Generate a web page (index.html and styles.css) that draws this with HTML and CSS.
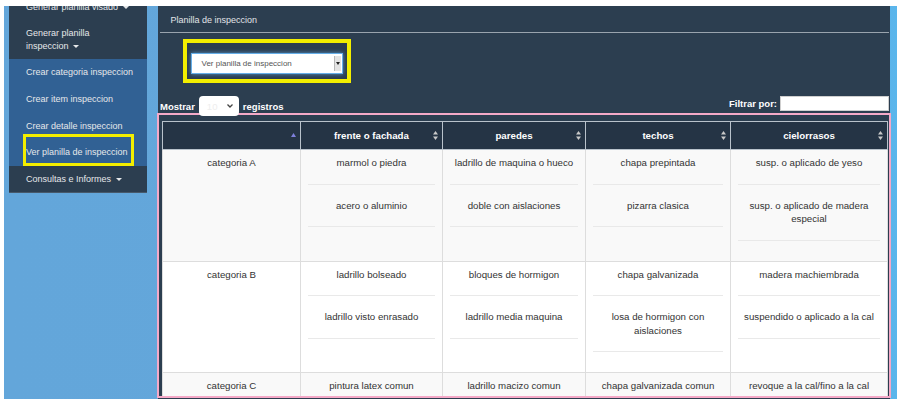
FILE: index.html
```html
<!DOCTYPE html>
<html lang="es">
<head>
<meta charset="utf-8">
<title>Planilla de inspeccion</title>
<link rel="stylesheet" href="styles.css">
</head>
<body>
<div class="frame">
  <nav class="sidebar">
    <div class="nav-item">Generar planilla visado <span class="caret"></span></div>
    <div class="nav-item">Generar planilla<br>inspeccion <span class="caret"></span></div>
    <div class="submenu">
      <div class="sub-item">Crear categoria inspeccion</div>
      <div class="sub-item">Crear item inspeccion</div>
      <div class="sub-item">Crear detalle inspeccion</div>
      <div class="sub-item active">Ver planilla de inspeccion</div>
    </div>
    <div class="nav-item">Consultas e Informes <span class="caret"></span></div>
  </nav>

  <main class="panel">
    <div class="panel-title">Planilla de inspeccion</div>
    <div class="rule"></div>

    <div class="picker">
      <div class="fake-select">
        <span>Ver planilla de inspeccion</span>
        <span class="fake-arrow"><span class="tri"></span></span>
      </div>
    </div>

    <div class="controls">
      <span>Mostrar</span>
      <span class="len-select">
        <span class="len-val">10</span>
        <svg width="6" height="4" viewBox="0 0 6 4"><polyline points="0.5,0.5 3,3 5.5,0.5" fill="none" stroke="#444" stroke-width="1.3"/></svg>
      </span>
      <span>registros</span>
      <div class="filter">
        <span>Filtrar por:</span>
        <span class="filter-input"></span>
      </div>
    </div>

    <div class="results">
      <table class="grid">
        <colgroup>
          <col class="c1"><col class="c2"><col class="c3"><col class="c4"><col class="c5">
        </colgroup>
        <thead>
          <tr>
            <th><div class="th-inner"><span></span><span></span><svg class="sort" width="5" height="4" viewBox="0 0 5 4"><polygon points="0,4 2.5,0 5,4" fill="#7f80dc"/></svg></div></th>
            <th><div class="th-inner"><span></span><span>frente o fachada</span><svg class="sort" width="5" height="9" viewBox="0 0 5 9"><polygon points="0,3.6 2.5,0 5,3.6" fill="#c9c9c9"/><polygon points="0,5.4 2.5,9 5,5.4" fill="#c9c9c9"/></svg></div></th>
            <th><div class="th-inner"><span></span><span>paredes</span><svg class="sort" width="5" height="9" viewBox="0 0 5 9"><polygon points="0,3.6 2.5,0 5,3.6" fill="#c9c9c9"/><polygon points="0,5.4 2.5,9 5,5.4" fill="#c9c9c9"/></svg></div></th>
            <th><div class="th-inner"><span></span><span>techos</span><svg class="sort" width="5" height="9" viewBox="0 0 5 9"><polygon points="0,3.6 2.5,0 5,3.6" fill="#c9c9c9"/><polygon points="0,5.4 2.5,9 5,5.4" fill="#c9c9c9"/></svg></div></th>
            <th><div class="th-inner"><span></span><span>cielorrasos</span><svg class="sort" width="5" height="9" viewBox="0 0 5 9"><polygon points="0,3.6 2.5,0 5,3.6" fill="#c9c9c9"/><polygon points="0,5.4 2.5,9 5,5.4" fill="#c9c9c9"/></svg></div></th>
          </tr>
        </thead>
        <tbody>
          <tr>
            <td>categoria A</td>
            <td><div class="item">marmol o piedra</div><div class="item">acero o aluminio</div></td>
            <td><div class="item">ladrillo de maquina o hueco</div><div class="item">doble con aislaciones</div></td>
            <td><div class="item">chapa prepintada</div><div class="item">pizarra clasica</div></td>
            <td><div class="item">susp. o aplicado de yeso</div><div class="item">susp. o aplicado de madera especial</div></td>
          </tr>
          <tr>
            <td>categoria B</td>
            <td><div class="item">ladrillo bolseado</div><div class="item">ladrillo visto enrasado</div></td>
            <td><div class="item">bloques de hormigon</div><div class="item">ladrillo media maquina</div></td>
            <td><div class="item">chapa galvanizada</div><div class="item">losa de hormigon con aislaciones</div></td>
            <td><div class="item">madera machiembrada</div><div class="item">suspendido o aplicado a la cal</div></td>
          </tr>
          <tr>
            <td>categoria C</td>
            <td><div class="item">pintura latex comun</div></td>
            <td><div class="item">ladrillo macizo comun</div></td>
            <td><div class="item">chapa galvanizada comun</div></td>
            <td><div class="item">revoque a la cal/fino a la cal</div></td>
          </tr>
        </tbody>
      </table>
    </div>
  </main>
</div>
</body>
</html>
```

FILE: styles.css
```css
html, body {
  margin: 0;
  padding: 0;
  background: #ffffff;
  font-family: "Liberation Sans", Arial, Helvetica, sans-serif;
}

.frame {
  margin: 6px 0 0 4px;
  height: 393px;
  overflow: hidden;
  background: linear-gradient(to right, #63a6da 0%, #64a8dc 92%, #5ab6ec 100%);
  display: flex;
  align-items: flex-start;
  padding-left: 5px;
}

/* ---------- sidebar ---------- */
.sidebar {
  width: 138px;
  flex: none;
  margin-top: -12.5px;
  background: #2c3e50;
  color: #e6e8ea;
  font-size: 9px;
  line-height: 13px;
  border-bottom: 1px solid #47596b;
}

.nav-item {
  padding: 7px 4px 6px 17px;
  white-space: nowrap;
}

.caret {
  display: inline-block;
  width: 0;
  height: 0;
  border-top: 3px solid #e6e8ea;
  border-left: 3px solid transparent;
  border-right: 3px solid transparent;
  vertical-align: middle;
  margin-left: 2px;
}

.submenu {
  background: #316194;
}

.sub-item {
  padding: 7.5px 2px 6.25px 17px;
  position: relative;
  white-space: nowrap;
}

.sub-item.active::after {
  content: "";
  position: absolute;
  left: 14px;
  top: -5px;
  width: 111px;
  height: 32px;
  box-sizing: border-box;
  border: 3px solid #f3ee00;
}

/* ---------- main panel ---------- */
.panel {
  margin-left: 11px;
  width: 732px;
  flex: none;
  height: 393px;
  background: #2c3e50;
  display: flex;
  flex-direction: column;
}

.panel-title {
  height: 26px;
  box-sizing: border-box;
  padding: 2px 0 0 12.5px;
  line-height: 24px;
  font-size: 9px;
  color: #e2e5e8;
}

.rule {
  height: 1px;
  background: #9aa4ae;
  margin: 0 1px 0 2px;
}

.picker {
  align-self: flex-start;
  margin: 6px 0 0 24.5px;
  width: 168px;
  height: 44px;
  box-sizing: border-box;
  border: 4px solid #f3ee00;
  padding: 10px 4px 5px;
}

.fake-select {
  height: 21px;
  box-sizing: border-box;
  background: #ffffff;
  border: 1px solid #66afe9;
  box-shadow: 0 0 4px rgba(102, 175, 233, 0.75);
  display: flex;
  align-items: center;
  padding-left: 10px;
  font-size: 8px;
  color: #555555;
}

.fake-arrow {
  margin-left: auto;
  margin-right: 1px;
  width: 6px;
  height: 15px;
  background: #e4e4e4;
  border-left: 1px solid #b8b8b8;
  display: flex;
  align-items: center;
  justify-content: center;
}

.tri {
  width: 0;
  height: 0;
  border-top: 3px solid #222;
  border-left: 2px solid transparent;
  border-right: 2px solid transparent;
}

.controls {
  display: flex;
  align-items: center;
  margin-top: 13px;
  height: 20px;
  margin-bottom: -3.5px;
  padding: 0 1px 0 2px;
  color: #ffffff;
  font-weight: bold;
  font-size: 9.5px;
}

.len-select {
  position: relative;
  z-index: 1;
  width: 40px;
  height: 20px;
  box-sizing: border-box;
  margin: 0 4px;
  background: #ffffff;
  border-radius: 4px;
  display: flex;
  align-items: center;
  padding: 0 6px 0 8px;
  font-weight: normal;
}

.len-val {
  flex: 1;
  color: #eeeeee;
  font-size: 9.5px;
}

.filter {
  margin-left: auto;
  align-self: flex-start;
  display: flex;
  align-items: center;
  height: 15px;
  gap: 3px;
}

.filter-input {
  width: 109px;
  height: 15px;
  box-sizing: border-box;
  background: #ffffff;
  border: 1px solid #cfcfcf;
}

/* ---------- results table ---------- */
.results {
  flex: 1;
  min-height: 0;
  margin: 0 -1px 1px;
  border: 2px solid #f5a9c8;
  padding: 6px 2px 0 3px;
  overflow: hidden;
}

.grid {
  width: 725px;
  table-layout: fixed;
  border-collapse: collapse;
  font-size: 9.7px;
  line-height: 13.5px;
}

.c1 { width: 138px; }
.c2 { width: 142px; }
.c3 { width: 143px; }
.c4 { width: 145px; }
.c5 { width: 157px; }

.grid th {
  background: #253445;
  color: #ffffff;
  font-weight: bold;
  border: 1px solid #b9c2cb;
  padding: 7px 4px;
}

.th-inner {
  display: grid;
  grid-template-columns: 1fr auto 1fr;
  align-items: center;
}

.sort {
  justify-self: end;
  display: block;
}

.grid td {
  border: 1px solid #dddddd;
  padding: 6px 7px 20px;
  vertical-align: top;
  text-align: center;
  color: #333333;
}

.grid tbody tr:nth-child(odd) td {
  background: #f9f9f9;
}

.grid tbody tr:nth-child(even) td {
  background: #ffffff;
}

.item {
  padding: 14px 0;
  border-bottom: 1px solid #e9e9e9;
}

.item:first-child {
  padding-top: 0;
}
```
